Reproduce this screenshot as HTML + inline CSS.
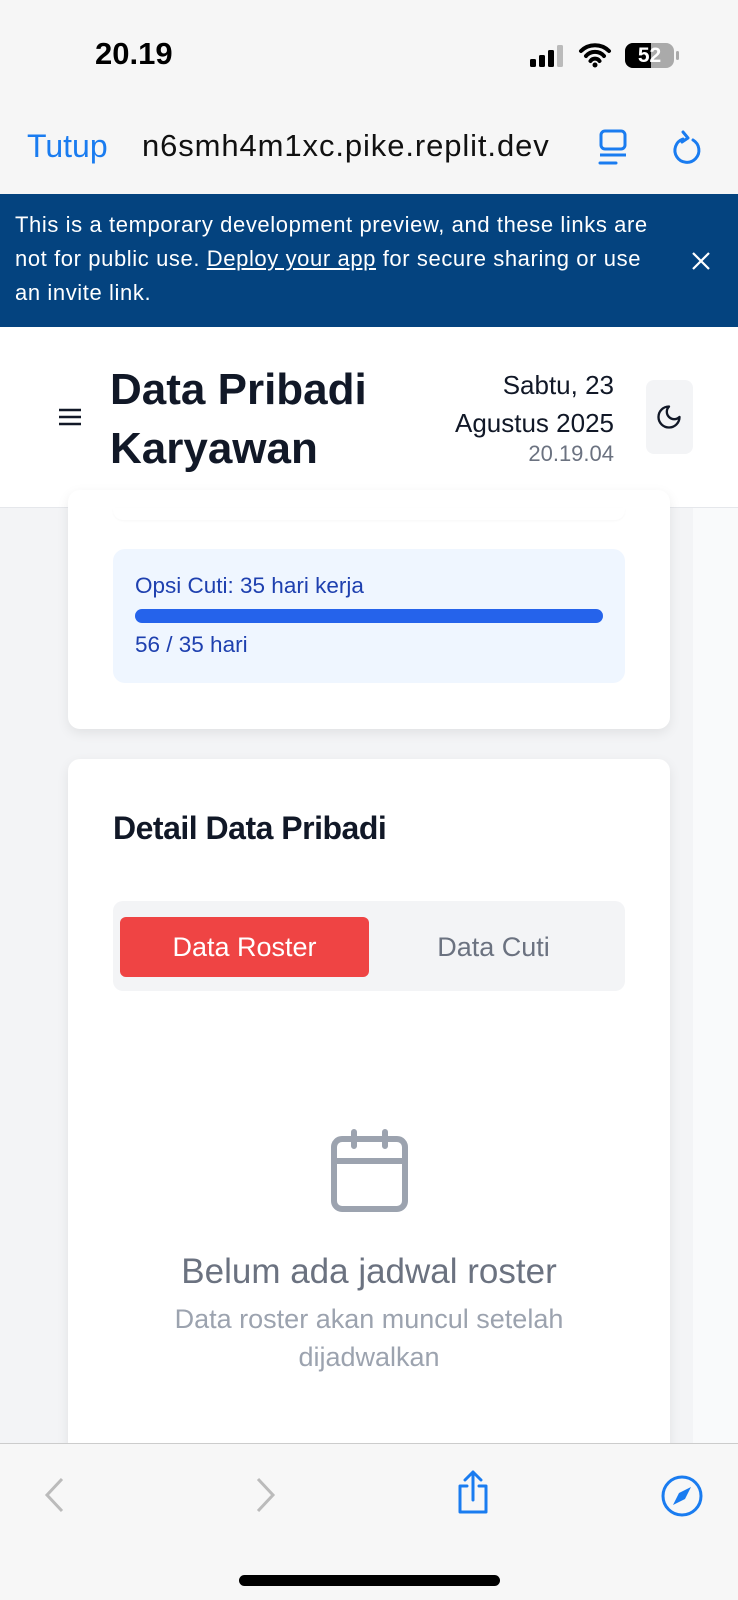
<!DOCTYPE html>
<html><head><meta charset="utf-8"><style>
*{box-sizing:border-box;margin:0;padding:0}
body{width:738px;height:1600px;overflow:hidden;background:#f3f4f6;font-family:"Liberation Sans",sans-serif;position:relative}
.abs{position:absolute}
</style></head><body>
<div class="abs" style="left:0;top:0;width:738px;height:194px;background:#f6f6f6"></div>
<div class="abs" style="left:95px;top:36px;font-size:31px;font-weight:bold;color:#000">20.19</div>
<svg class="abs" style="left:528px;top:44px" width="40" height="24"><rect x="2" y="15" width="6" height="8" rx="1.5" fill="#000"/><rect x="11" y="11" width="6" height="12" rx="1.5" fill="#000"/><rect x="20" y="6" width="6" height="17" rx="1.5" fill="#000"/><rect x="29" y="1" width="6" height="22" rx="1.5" fill="#bbb"/></svg>
<svg class="abs" style="left:578px;top:42px" width="34" height="26" viewBox="0 0 34 26"><path d="M3 9a20 20 0 0 1 28 0M8 14a12 12 0 0 1 18 0M12.5 19a5.5 5.5 0 0 1 9 0" stroke="#000" stroke-width="4" fill="none" stroke-linecap="round"/><circle cx="17" cy="23" r="2.5" fill="#000"/></svg>
<div class="abs" style="left:625px;top:43px;width:49px;height:25px;border-radius:8px;background:#aaa;overflow:hidden"><div style="width:26px;height:25px;background:#000"></div><div class="abs" style="left:0;top:0;width:49px;text-align:center;color:#fff;font-weight:bold;font-size:21px;line-height:25px">52</div></div>
<div class="abs" style="left:676px;top:51px;width:3px;height:9px;background:#aaa;border-radius:2px"></div>
<div class="abs" style="left:27px;top:128px;font-size:32px;color:#1a7cf0">Tutup</div>
<div class="abs" style="left:142px;top:128px;font-size:31px;letter-spacing:0.9px;color:#111">n6smh4m1xc.pike.replit.dev</div>
<svg class="abs" style="left:596px;top:128px" width="36" height="40" viewBox="0 0 36 40"><rect x="5" y="3" width="24" height="18" rx="4" fill="none" stroke="#1a7cf0" stroke-width="3"/><line x1="4" y1="27" x2="30" y2="27" stroke="#1a7cf0" stroke-width="3"/><line x1="4" y1="35" x2="20" y2="35" stroke="#1a7cf0" stroke-width="3" stroke-linecap="round"/></svg>
<svg class="abs" style="left:671px;top:128px" width="34" height="40" viewBox="0 0 34 40"><path d="M22 12a12 12 0 1 1-10-1" fill="none" stroke="#1a7cf0" stroke-width="3" stroke-linecap="round"/><path d="M12 4l5 6-6 4" fill="none" stroke="#1a7cf0" stroke-width="3" stroke-linecap="round" stroke-linejoin="round"/></svg>

<div class="abs" style="left:0;top:194px;width:738px;height:133px;background:#04437f;color:#fff;font-size:22px;letter-spacing:0.6px;line-height:34px;padding:14px 15px;white-space:nowrap">This is a temporary development preview, and these links are<br>not for public use. <u>Deploy your app</u> for secure sharing or use<br>an invite link.</div>
<svg class="abs" style="left:690px;top:250px" width="22" height="22"><path d="M3 3l16 16M19 3L3 19" stroke="#fff" stroke-width="2.2"/></svg>

<div class="abs" style="left:0;top:327px;width:738px;height:181px;background:#fff;border-bottom:1px solid #e5e7eb"></div>
<svg class="abs" style="left:58px;top:407px" width="24" height="20"><path d="M1 3h22M1 10h22M1 17h22" stroke="#111827" stroke-width="2.5"/></svg>
<div class="abs" style="left:110px;top:360px;font-size:44px;font-weight:bold;color:#111827;line-height:59px">Data Pribadi<br>Karyawan</div>
<div class="abs" style="left:360px;top:366px;width:254px;text-align:right;color:#111827;font-size:26px;line-height:38px">Sabtu, 23<br>Agustus 2025</div>
<div class="abs" style="left:380px;top:441px;width:234px;text-align:right;color:#6b7280;font-size:22px">20.19.04</div>
<div class="abs" style="left:646px;top:380px;width:47px;height:74px;background:#f3f4f6;border-radius:8px"></div>
<svg class="abs" style="left:655px;top:403px" width="28" height="28" viewBox="0 0 24 24"><path d="M12 3a6 6 0 0 0 9 9 9 9 0 1 1-9-9z" fill="none" stroke="#111827" stroke-width="2" stroke-linejoin="round"/></svg>

<div class="abs" style="left:693px;top:508px;width:45px;height:935px;background:#f9fafb"></div>
<div class="abs" style="left:68px;top:490px;width:602px;height:239px;background:#fff;border-radius:12px;box-shadow:0 4px 12px rgba(0,0,0,.08)"></div>
<div class="abs" style="left:113px;top:508px;width:512px;height:12px;background:#fff;border-radius:0 0 10px 10px;box-shadow:0 1px 2px rgba(0,0,0,.03)"></div>
<div class="abs" style="left:113px;top:549px;width:512px;height:134px;background:#eff6ff;border-radius:12px"></div>
<div class="abs" style="left:135px;top:573px;font-size:22.5px;color:#1e40af">Opsi Cuti: 35 hari kerja</div>
<div class="abs" style="left:135px;top:609px;width:468px;height:14px;background:#2563eb;border-radius:7px"></div>
<div class="abs" style="left:135px;top:632px;font-size:22.5px;color:#1e40af">56 / 35 hari</div>

<div class="abs" style="left:68px;top:759px;width:602px;height:760px;background:#fff;border-radius:12px;box-shadow:0 4px 12px rgba(0,0,0,.08)"></div>
<div class="abs" style="left:113px;top:810px;font-size:32px;font-weight:bold;color:#111827;letter-spacing:-0.5px">Detail Data Pribadi</div>
<div class="abs" style="left:113px;top:901px;width:512px;height:90px;background:#f3f4f6;border-radius:10px"></div>
<div class="abs" style="left:120px;top:917px;width:249px;height:60px;background:#ef4444;border-radius:6px;color:#fff;font-size:27px;text-align:center;line-height:60px">Data Roster</div>
<div class="abs" style="left:369px;top:917px;width:249px;height:60px;color:#6b7280;font-size:27px;text-align:center;line-height:60px">Data Cuti</div>
<svg class="abs" style="left:330px;top:1128px" width="80" height="88" viewBox="0 0 80 88"><rect x="4" y="11" width="71" height="70" rx="8" fill="none" stroke="#9ca3af" stroke-width="6"/><path d="M4 33h71M24 4v14M55 4v14" stroke="#9ca3af" stroke-width="6" stroke-linecap="round"/></svg>
<div class="abs" style="left:68px;top:1252px;width:602px;text-align:center;font-size:35px;color:#6b7280">Belum ada jadwal roster</div>
<div class="abs" style="left:68px;top:1300px;width:602px;text-align:center;font-size:27px;line-height:38px;color:#9ca3af">Data roster akan muncul setelah<br>dijadwalkan</div>

<div class="abs" style="left:0;top:1443px;width:738px;height:157px;background:#f7f7f7;border-top:1px solid #ccc"></div>
<svg class="abs" style="left:42px;top:1477px" width="24" height="36"><path d="M20 2L5 18l15 16" stroke="#bbb" stroke-width="3" fill="none"/></svg>
<svg class="abs" style="left:254px;top:1477px" width="24" height="36"><path d="M4 2l15 16L4 34" stroke="#bbb" stroke-width="3" fill="none"/></svg>
<svg class="abs" style="left:454px;top:1470px" width="38" height="46" viewBox="0 0 38 46"><path d="M13 16H6v26h26V16h-7M19 2v28M11 10l8-8 8 8" fill="none" stroke="#1a7cf0" stroke-width="3" stroke-linejoin="round" stroke-linecap="round"/></svg>
<svg class="abs" style="left:660px;top:1474px" width="44" height="44" viewBox="0 0 44 44"><circle cx="22" cy="22" r="19" fill="none" stroke="#1a7cf0" stroke-width="3"/><path d="M31 13l-12 6-6 12 12-6z" fill="#1a7cf0"/></svg>
<div class="abs" style="left:239px;top:1575px;width:261px;height:11px;background:#000;border-radius:6px"></div>
</body></html>
